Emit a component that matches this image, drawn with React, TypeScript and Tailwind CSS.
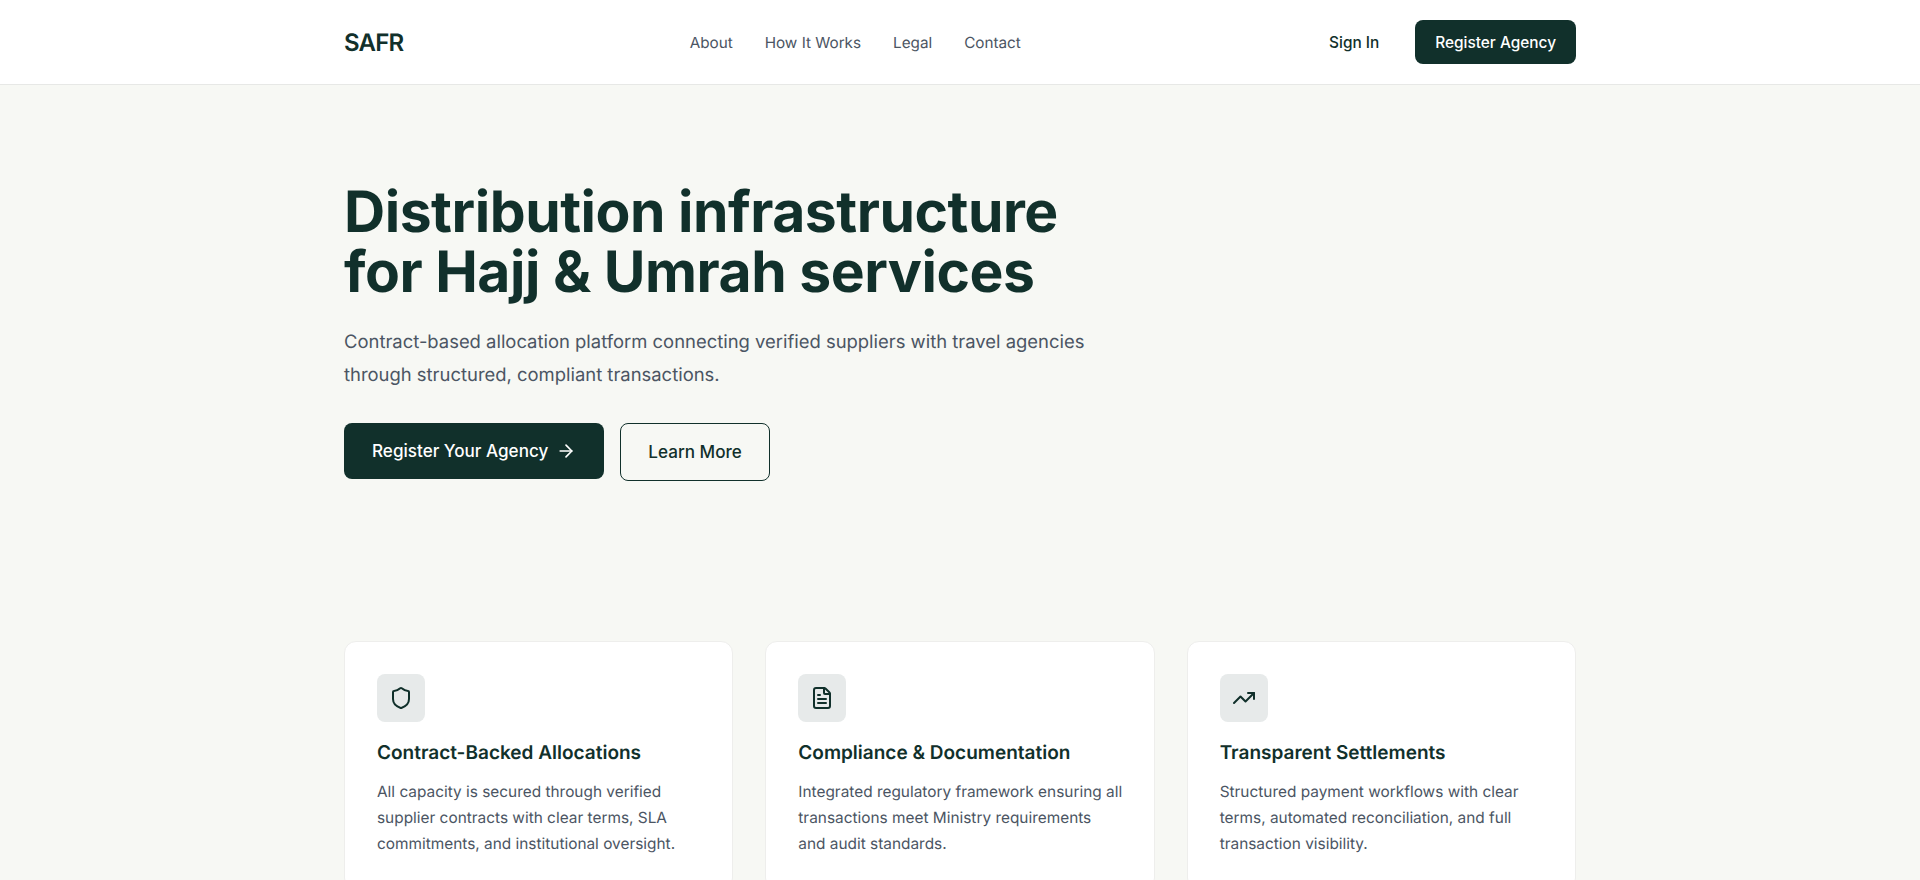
import React from 'react'
import { ArrowRight, FileText, Shield, TrendingUp } from 'lucide-react'

const navLinks = ['About', 'How It Works', 'Legal', 'Contact']

const features = [
  {
    icon: Shield,
    title: 'Contract-Backed Allocations',
    lines: ['All capacity is secured through verified', 'supplier contracts with clear terms, SLA', 'commitments, and institutional oversight.'],
  },
  {
    icon: FileText,
    title: 'Compliance & Documentation',
    lines: ['Integrated regulatory framework ensuring all', 'transactions meet Ministry requirements', 'and audit standards.'],
  },
  {
    icon: TrendingUp,
    title: 'Transparent Settlements',
    lines: ['Structured payment workflows with clear', 'terms, automated reconciliation, and full', 'transaction visibility.'],
  },
]

const App: React.FC = () => {
  return (
    <div className="h-[880px] overflow-hidden bg-[#f7f8f4] font-['Inter',sans-serif] text-[#11302b] [text-rendering:geometricPrecision]">
      <header className="h-[85px] border-b border-[#e7e8e6] bg-white">
        <div className="mx-auto flex h-[84px] max-w-7xl items-center justify-between px-6">
          <span className="pt-0.5 text-2xl font-semibold tracking-[-0.8px]">SAFR</span>
          <nav className="mr-[6px] flex items-center gap-8 pt-px">
            {navLinks.map((link) => (
              <a key={link} className="text-[15.25px] leading-6 text-[#4b5563]">
                {link}
              </a>
            ))}
          </nav>
          <div className="flex items-center gap-5">
            <button className="px-4 pt-[9px] pb-[7px] text-[15.4px] leading-6 font-medium">Sign In</button>
            <button className="h-11 rounded-lg bg-[#11302b] px-5 pt-px text-[15.4px] leading-6 font-medium text-white">
              Register Agency
            </button>
          </div>
        </div>
      </header>

      <main className="mx-auto max-w-7xl px-6">
        <section className="pt-[97px] pb-40">
          <h1 className="text-[57px] leading-[60px] font-bold tracking-[-0.47px]">
            Distribution infrastructure
            <br />
            for Hajj &amp; Umrah services
          </h1>
          <p className="mt-6 text-[18.43px] leading-[32.5px] text-[#4b5563]">
            Contract-based allocation platform connecting verified suppliers with travel agencies
            <br />
            through structured, compliant transactions.
          </p>
          <div className="mt-8 flex items-start gap-4">
            <button className="flex h-14 items-center gap-2 rounded-lg bg-[#11302b] px-7 text-[17.1px] font-medium text-white">
              Register Your Agency
              <ArrowRight size={20} />
            </button>
            <button className="h-[58px] rounded-lg border border-[#11302b] px-[27px] text-[17.1px] font-medium">
              Learn More
            </button>
          </div>
        </section>

        <section className="grid grid-cols-3 gap-8">
          {features.map(({ icon: Icon, title, lines }) => (
            <div key={title} className="rounded-xl border border-[#eeeeec] bg-white p-8">
              <div className="flex h-12 w-12 items-center justify-center rounded-lg bg-[#e7eaea]">
                <Icon size={24} />
              </div>
              <h3 className="mt-[17px] text-[19px] leading-7 font-semibold">{title}</h3>
              <p className="mt-3 text-[15.4px] leading-[26px] text-[#4b5563]">
                {lines.map((line) => (
                  <span key={line} className="block whitespace-nowrap">
                    {line}
                  </span>
                ))}
              </p>
            </div>
          ))}
        </section>
      </main>
    </div>
  )
}

export default App
